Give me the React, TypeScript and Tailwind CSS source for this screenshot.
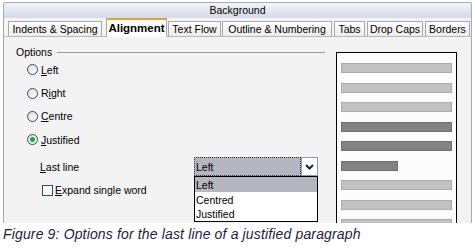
import React from "react";

const Radio = ({ checked }: { checked?: boolean }) => (
  <div className="w-[11px] h-[11px] rounded-full border border-[#1c5180] bg-gradient-to-br from-[#dcdcd6] to-white flex items-center justify-center shrink-0">
    {checked && <div className="w-[5px] h-[5px] rounded-full bg-[#2aa52a]" />}
  </div>
);

const Bar = ({ dark, short }: { dark?: boolean; short?: boolean }) => (
  <div
    className={
      "h-[10px] shrink-0 border " +
      (dark ? "bg-[#838383] border-[#6e6e6e] " : "bg-[#c2c2c2] border-[#acacac] ") +
      (short ? "w-[57px]" : "w-[111px]")
    }
  />
);

const Tab = ({ label, w, ml, active }: { label: string; w: string; ml: string; active?: boolean }) => (
  <div
    className={
      "flex items-center justify-center text-black " +
      w +
      " " +
      ml +
      (active
        ? " h-[19px] bg-white border-t-2 border-t-[#f0a030] border-x border-x-[#a8a8a8] font-bold text-[11.5px] relative z-10"
        : " h-[15px] bg-gradient-to-b from-white to-[#ececec] border border-[#a8a8a8] border-b-0 text-[10.5px]")
    }
  >
    <span className="leading-none whitespace-nowrap">{label}</span>
  </div>
);

export default function App() {
  return (
    <div className="w-[475px] h-[248px] bg-white overflow-hidden font-['Liberation_Sans',Arial,sans-serif] text-black">
      <div className="ml-[3px] w-[469px] pt-[2px]">
        {/* Background bar */}
        <div className="h-[16px] rounded-tl-[3px] rounded-tr-[2px] border border-b-0 border-[#a4acbc] bg-gradient-to-b from-[#f2f4f9] to-[#d3dae9] flex items-center justify-center text-[10.5px] leading-none">
          Background
        </div>
        {/* Tabs row */}
        <div className="h-[19px] flex items-end bg-[#f4f4f4] border-x border-[#a8a8a8] border-b border-b-[#b8b8b8]">
          <Tab label="Indents & Spacing" w="w-[94px]" ml="ml-[4px]" />
          <Tab label="Alignment" w="w-[61px]" ml="ml-[4px] mb-[-1px]" active />
          <Tab label="Text Flow" w="w-[53px]" ml="ml-[1px]" />
          <Tab label="Outline & Numbering" w="w-[110px]" ml="ml-[1px]" />
          <Tab label="Tabs" w="w-[31px]" ml="ml-[2px]" />
          <Tab label="Drop Caps" w="w-[56px]" ml="ml-[2px]" />
          <Tab label="Borders" w="w-[45px]" ml="ml-[2px]" />
        </div>
        {/* Panel */}
        <div className="h-[186px] border-x border-[#a8a8a8] bg-[#f3f3f3] flex overflow-hidden text-[10.5px] leading-[12px]">
          <div className="w-[332px] shrink-0 flex flex-col">
            <div className="mt-[9px] ml-[12px] flex items-center h-[12px]">
              <span>Options</span>
              <div className="ml-[5px] w-[268px] h-px bg-[#9a9a9a]" />
            </div>
            <div className="ml-[23px] flex flex-col">
              <div className="h-[23.4px] flex items-center gap-[3px]">
                <Radio />
                <span><u>L</u>eft</span>
              </div>
              <div className="h-[23.4px] flex items-center gap-[3px]">
                <Radio />
                <span>R<u>i</u>ght</span>
              </div>
              <div className="h-[23.4px] flex items-center gap-[3px]">
                <Radio />
                <span><u>C</u>entre</span>
              </div>
              <div className="h-[23.4px] flex items-center gap-[3px]">
                <Radio checked />
                <span><u>J</u>ustified</span>
              </div>
            </div>
            <div className="mt-[5.5px] ml-[36px] h-[19px] flex items-center">
              <span className="w-[154px]"><u>L</u>ast line</span>
              <div className="relative flex h-[19px] w-[124px]">
                <div className="w-[107px] h-[19px] bg-[#b6b6c0] border border-dotted border-[#333] flex items-center pl-[1px]">
                  Left
                </div>
                <div className="w-[17px] h-[19px] bg-white border border-[#7f9db9] flex items-center justify-center">
                  <svg width="9" height="6" viewBox="0 0 9 6">
                    <path d="M1 1 L4.5 4.5 L8 1" stroke="#222" strokeWidth="2" fill="none" />
                  </svg>
                </div>
                <div className="absolute left-0 top-[19px] w-[124px] h-[46px] bg-white border border-black flex flex-col z-10">
                  <div className="h-[15px] bg-[#b6b6c0] flex items-center pl-[1px]">Left</div>
                  <div className="h-[15px] flex items-center pl-[1px]">Centred</div>
                  <div className="h-[14px] flex items-center pl-[1px]">Justified</div>
                </div>
              </div>
            </div>
            <div className="mt-[5px] ml-[38px] h-[18px] flex items-center gap-[2px]">
              <div className="w-[11px] h-[11px] border border-[#1c5180] bg-white shrink-0" />
              <span><u>E</u>xpand single word</span>
            </div>
          </div>
          <div className="mt-[15px] w-[121px] h-[200px] shrink-0 bg-[#fcfcfc] border-x border-t border-black pt-[10px] pl-[4px] flex flex-col gap-[9.5px]">
            <Bar />
            <Bar />
            <Bar />
            <Bar dark />
            <Bar dark />
            <Bar dark short />
            <Bar />
            <Bar />
            <Bar />
          </div>
        </div>
      </div>
      <div className="pl-[3px] pt-[3px] text-[14px] leading-[16px] italic text-[#1e1e3c] tracking-[0.15px] whitespace-nowrap">
        Figure 9: Options for the last line of a justified paragraph
      </div>
    </div>
  );
}
